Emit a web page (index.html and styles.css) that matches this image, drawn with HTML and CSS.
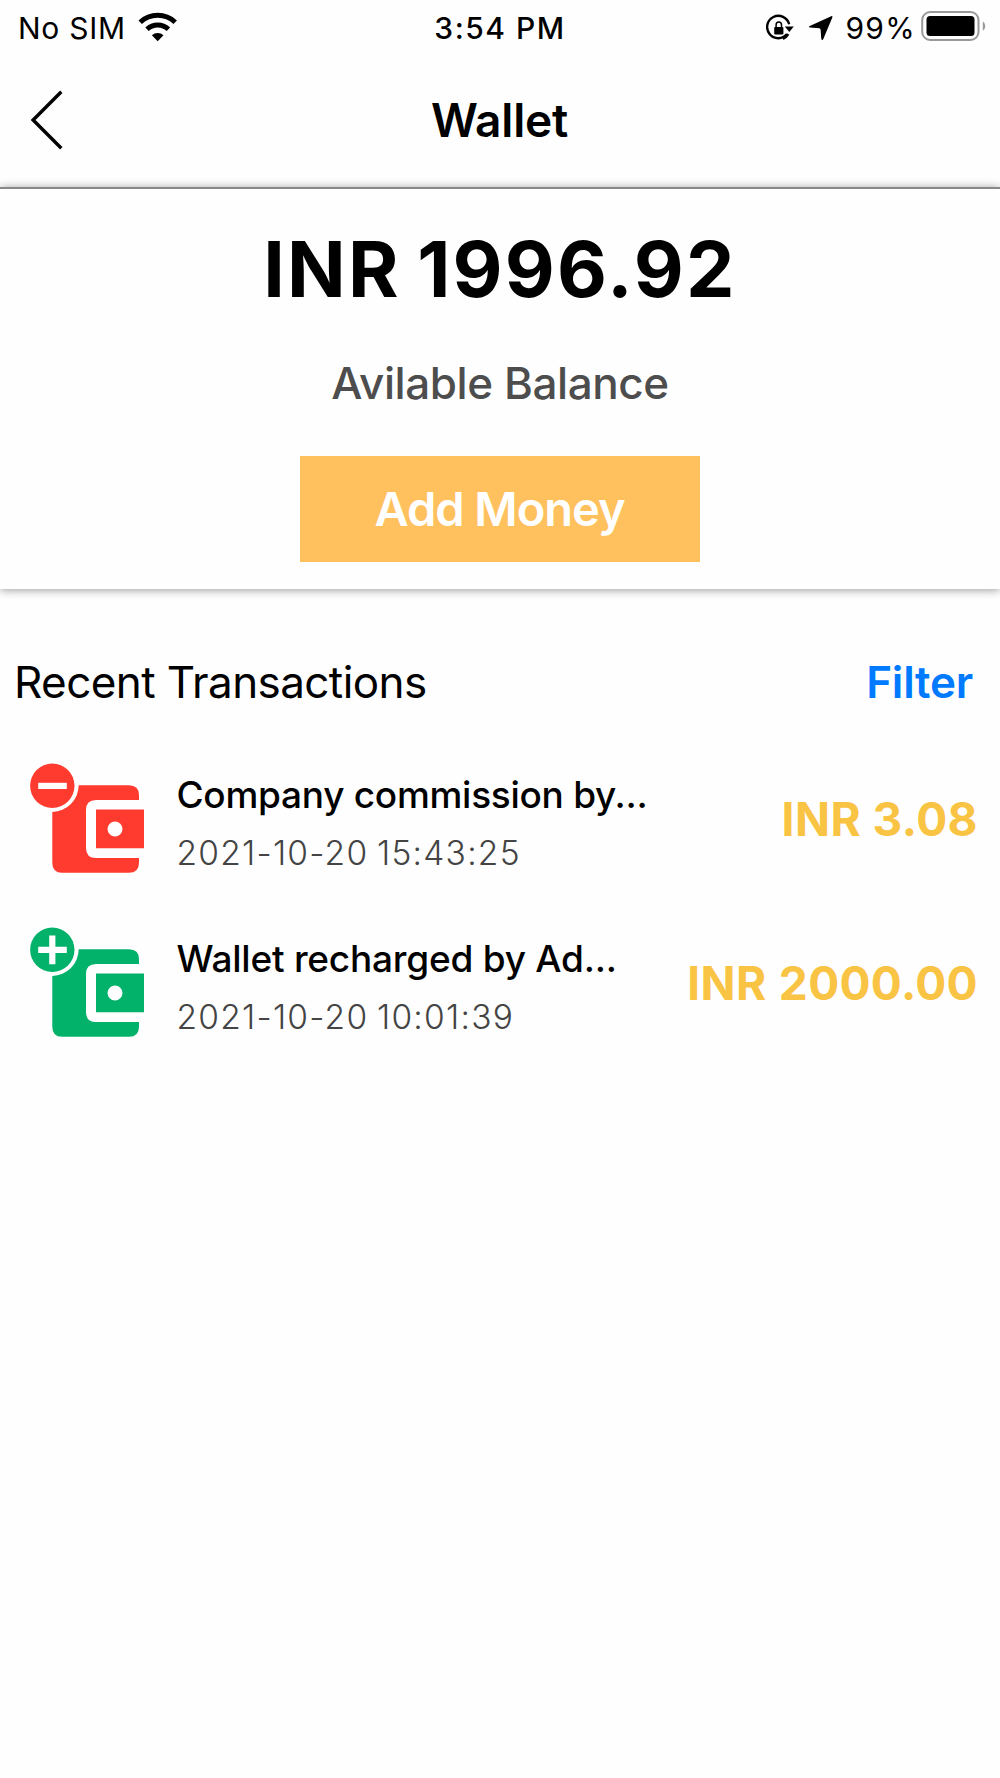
FILE: index.html
```html
<!DOCTYPE html>
<html lang="en">
<head>
<meta charset="utf-8">
<title>Wallet</title>
<link rel="stylesheet" href="styles.css">
</head>
<body>
<div class="status">
  <div class="status-left">
    <span class="carrier">No SIM</span>
    <svg class="wifi" width="40" height="30" viewBox="0 0 40 30">
      <path d="M2.2 10.2A25.6 25.6 0 0 1 37.2 10.2" fill="none" stroke="#000" stroke-width="5"/>
      <path d="M9 17.2A15.6 15.6 0 0 1 30.4 17.2" fill="none" stroke="#000" stroke-width="5"/>
      <path d="M13.9 23.2A8.4 8.4 0 0 1 25.5 23.2L19.7 29.2Z"/>
    </svg>
  </div>
  <span class="time">3:54 PM</span>
  <div class="status-right">
    <svg class="lock" width="28" height="28" viewBox="0 0 28 28">
      <path d="M21 20.1A11.2 11.2 0 1 1 23.2 10.2" fill="none" stroke="#000" stroke-width="2.4"/>
      <path d="M17 24.8A11.2 11.2 0 0 0 22.3 20.2" fill="none" stroke="#000" stroke-width="2.4"/>
      <path d="M18.8 12.4H27.8L23.3 18Z"/>
      <rect x="8.2" y="12.9" width="9.2" height="7.6" rx="1"/>
      <path d="M10.1 13.5V11A2.7 2.9 0 0 1 15.5 11V13.5" fill="none" stroke="#000" stroke-width="1.5"/>
    </svg>
    <svg class="location" width="26" height="26" viewBox="0 0 26 26">
      <path d="M23.2 1.2Q25 .6 24.3 2.4L15.3 24Q14.3 26 13.3 23.9L12.6 14.6Q12.3 13.4 11.3 13.3L2 12.6Q0 11.9 1.8 10.9Z"/>
    </svg>
    <span class="percent">99%</span>
    <svg class="battery" width="66" height="32" viewBox="0 0 66 32">
      <rect x="2.2" y="2" width="56.3" height="28" rx="8" fill="none" stroke="#999" stroke-width="2"/>
      <rect x="6.5" y="6" width="48" height="20" rx="3.5"/>
      <path d="M62.8 11.2Q65.3 13 65.3 16T62.8 20.8Z" fill="#999"/>
    </svg>
  </div>
</div>
<header class="nav">
  <svg class="back" width="34" height="62" viewBox="0 0 34 62">
    <path d="M32.3 2.8L4.1 31L32.3 59.2" fill="none" stroke="#000" stroke-width="3.4"/>
  </svg>
  <h1 class="title">Wallet</h1>
</header>
<section class="balance">
  <div class="amount">INR 1996.92</div>
  <div class="caption">Avilable Balance</div>
  <button class="add">Add Money</button>
</section>
<main class="list">
  <div class="list-head">
    <h2 class="heading">Recent Transactions</h2>
    <a class="filter">Filter</a>
  </div>
  <div class="row">
    <svg class="wallet debit" width="114" height="110" viewBox="0 0 114 110">
      <path d="M48.7 22.3H99Q109 22.3 109 32.3V37H66Q56 37 56 47V85Q56 95 66 95H109V99.7Q109 109.7 99 109.7H32Q22.3 109.7 22.3 99.7V49A27 27 0 0 0 48.7 22.3Z"/>
      <path fill-rule="evenodd" d="M66 46.5H114V85.3H66ZM85 58.5A7.5 7.5 0 1 0 85 73.5A7.5 7.5 0 1 0 85 58.5Z"/>
      <circle cx="22.3" cy="22.8" r="22.2"/>
      <path d="M8.2 22.9H36.8" stroke="#fff" stroke-width="6.2"/>
    </svg>
    <div class="info">
      <div class="name">Company commission by...</div>
      <div class="date">2021-10-20 15:43:25</div>
    </div>
    <div class="value">INR 3.08</div>
  </div>
  <div class="row">
    <svg class="wallet credit" width="114" height="110" viewBox="0 0 114 110">
      <path d="M48.7 22.3H99Q109 22.3 109 32.3V37H66Q56 37 56 47V85Q56 95 66 95H109V99.7Q109 109.7 99 109.7H32Q22.3 109.7 22.3 99.7V49A27 27 0 0 0 48.7 22.3Z"/>
      <path fill-rule="evenodd" d="M66 46.5H114V85.3H66ZM85 58.5A7.5 7.5 0 1 0 85 73.5A7.5 7.5 0 1 0 85 58.5Z"/>
      <circle cx="22.3" cy="22.8" r="22.2"/>
      <path d="M8.2 22.9H36.8M22.3 8.6V37.2" stroke="#fff" stroke-width="6.2"/>
    </svg>
    <div class="info">
      <div class="name second">Wallet recharged by Ad...</div>
      <div class="date">2021-10-20 10:01:39</div>
    </div>
    <div class="value wide">INR 2000.00</div>
  </div>
</main>
</body>
</html>
```
FILE: styles.css
```css
* { box-sizing: border-box; }
body {
  margin: 0;
  min-height: 1778px;
  background: #fefefe;
  color: #000;
  font-family: Inter, "Liberation Sans", sans-serif;
  white-space: nowrap;
}
svg { display: block; flex: none; }

.status {
  display: grid;
  grid-template-columns: 1fr auto 1fr;
  align-items: center;
  height: 56px;
  padding: 0 15px 0 18px;
  font-size: 30px;
  line-height: 56px;
}
.status-left, .status-right { display: flex; align-items: center; }
.status-right { justify-content: flex-end; }
.carrier { letter-spacing: .73px; }
.wifi { margin: -2px 0 0 12px; }
.time { margin-right: 3px; font-weight: 550; letter-spacing: 1.5px; }
.lock { margin-right: 14px; }
.location { margin-right: 11px; }
.percent { letter-spacing: 1.3px; }
.battery { margin: -4px -1px 0 4px; }

.nav {
  display: grid;
  grid-template-columns: 1fr auto 1fr;
  align-items: center;
  height: 131px;
  padding: 0 30px 0 29px;
}
.back { margin-top: -3px; }
.title {
  margin: 0 0 2px;
  font-size: 46px;
  font-weight: 600;
  line-height: 129px;
  letter-spacing: -.2px;
}

.balance {
  display: flex;
  flex-direction: column;
  align-items: center;
  height: 402px;
  border-top: 2px solid #888;
  background: #fefefe;
  box-shadow: 0 1px 9px rgba(0, 0, 0, .4);
}
.amount {
  margin-top: 30px;
  font-size: 77px;
  font-weight: 700;
  line-height: 100px;
  letter-spacing: 2.2px;
  word-spacing: -4px;
}
.caption {
  margin-top: 34px;
  color: #4d4d4d;
  font-size: 44px;
  font-weight: 500;
  line-height: 60px;
  letter-spacing: -.42px;
}
.add {
  width: 400px;
  height: 106px;
  margin-top: 43px;
  padding: 0 1px 0 0;
  border: 0;
  background: #ffc15e;
  color: #fff;
  font: 600 47px/104px Inter, "Liberation Sans", sans-serif;
  letter-spacing: -1.02px;
}

.list { padding-top: 63px; }
.list-head {
  display: flex;
  justify-content: space-between;
  height: 84px;
  padding: 0 27px 0 14px;
  line-height: 60px;
}
.heading {
  margin: 0;
  font-size: 44px;
  font-weight: 400;
  letter-spacing: -.59px;
}
.filter {
  color: #007aff;
  font-size: 44px;
  font-weight: 600;
  letter-spacing: -.23px;
}
.row {
  display: flex;
  align-items: center;
  height: 164px;
  padding: 0 22px 0 30px;
}
.debit { fill: #ff3b30; }
.credit { fill: #03b26a; }
.info { flex: 1; margin: 11px 0 0 32.5px; }
.name {
  font-size: 37px;
  font-weight: 500;
  line-height: 58px;
  letter-spacing: -.27px;
}
.second { letter-spacing: -.22px; }
.date {
  color: #444;
  font-size: 33.5px;
  font-weight: 350;
  line-height: 58px;
  letter-spacing: 1.25px;
  word-spacing: -2px;
}
.value {
  padding-top: 2px;
  color: #f9c344;
  font-size: 46px;
  font-weight: 700;
  line-height: 60px;
  letter-spacing: .45px;
}
.wide { word-spacing: 1px; letter-spacing: .35px; }
```
